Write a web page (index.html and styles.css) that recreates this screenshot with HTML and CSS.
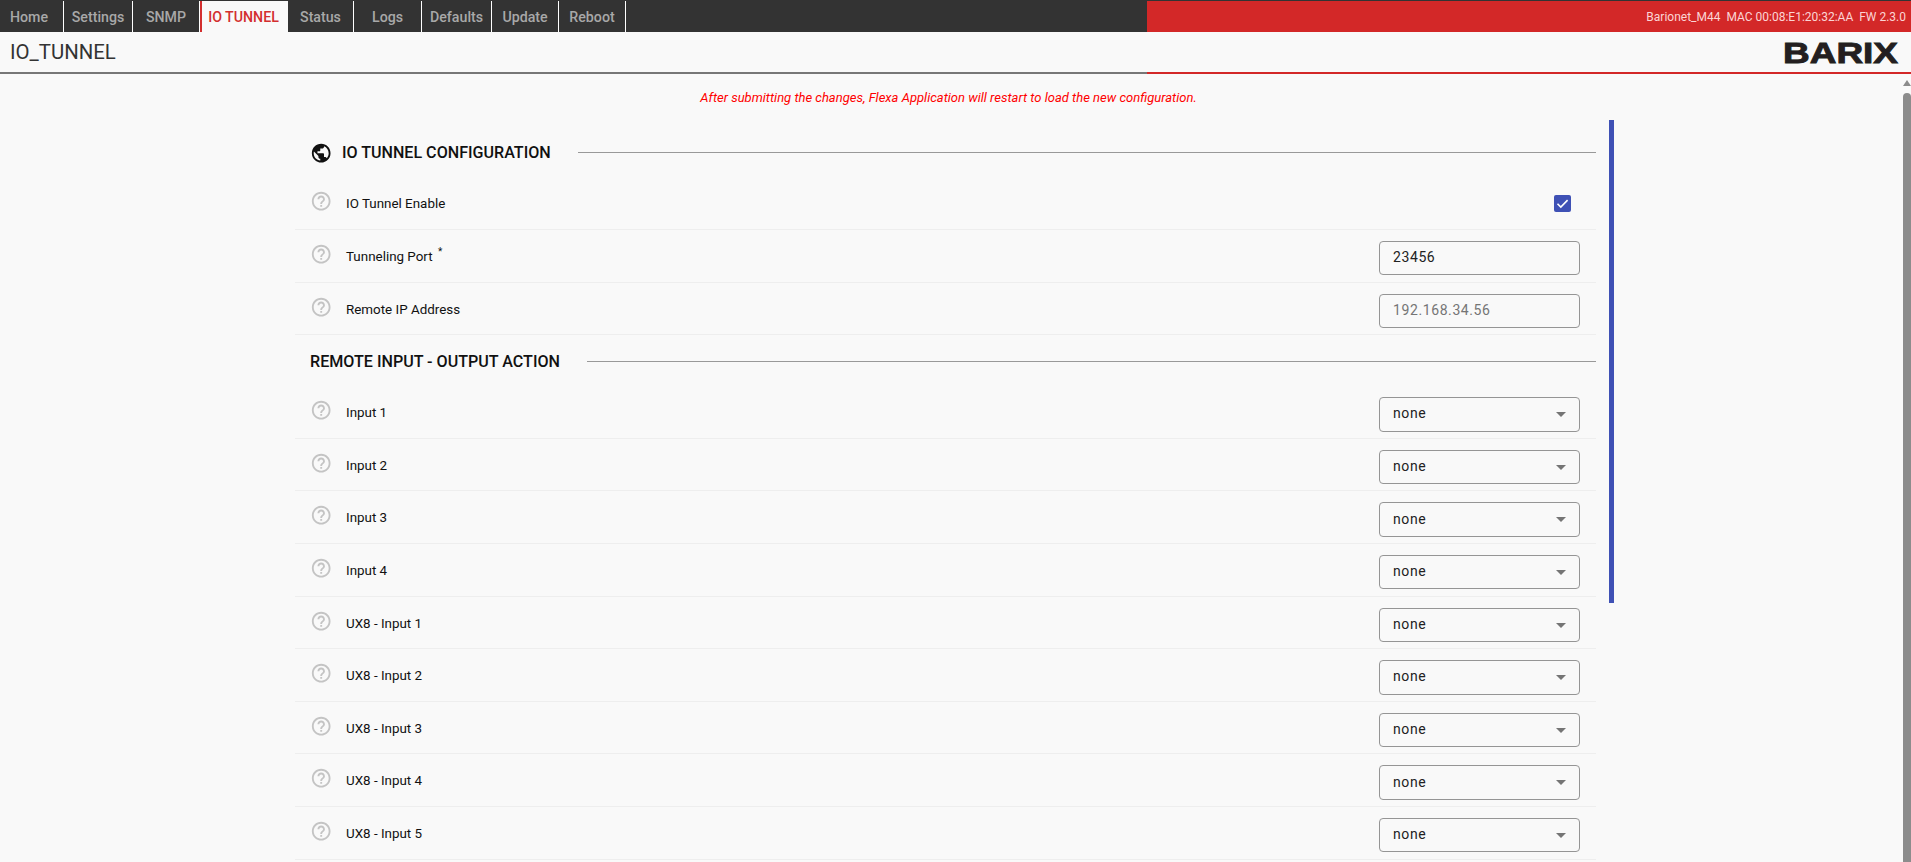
FILE: index.html
```html
<!DOCTYPE html>
<html lang="en">
<head>
<meta charset="utf-8">
<title>IO_TUNNEL</title>
<link rel="stylesheet" href="styles.css">
</head>
<body>
<svg class="defs" width="0" height="0" aria-hidden="true">
  <symbol id="help" viewBox="0 0 24 24"><path d="M11 18h2v-2h-2v2zm1-16C6.48 2 2 6.48 2 12s4.48 10 10 10 10-4.48 10-10S17.52 2 12 2zm0 18c-4.41 0-8-3.59-8-8s3.59-8 8-8 8 3.59 8 8-3.59 8-8 8zm0-14c-2.21 0-4 1.79-4 4h2c0-1.1.9-2 2-2s2 .9 2 2c0 2-3 1.75-3 5h2c0-2.25 3-2.5 3-5 0-2.21-1.79-4-4-4z"/></symbol>
  <symbol id="globe" viewBox="0 0 24 24"><path d="M12 2C6.48 2 2 6.48 2 12s4.48 10 10 10 10-4.48 10-10S17.52 2 12 2zm-1 17.93c-3.95-.49-7-3.85-7-7.93 0-.62.08-1.21.21-1.79L9 15v1c0 1.1.9 2 2 2v1.93zm6.9-2.54c-.26-.81-1-1.39-1.9-1.39h-1v-3c0-.55-.45-1-1-1H8v-2h2c.55 0 1-.45 1-1V7h2c1.1 0 2-.9 2-2v-.41c2.93 1.19 5 4.06 5 7.41 0 2.08-.8 3.97-2.1 5.39z"/></symbol>
</svg>
<header class="topbar">
  <nav class="tabs">
    <a class="tab tab-home">Home</a>
    <a class="tab">Settings</a>
    <a class="tab">SNMP</a>
    <a class="tab tab-active">IO TUNNEL</a>
    <a class="tab">Status</a>
    <a class="tab">Logs</a>
    <a class="tab">Defaults</a>
    <a class="tab">Update</a>
    <a class="tab">Reboot</a>
  </nav>
  <div class="device">Barionet_M44&nbsp; MAC 00:08:E1:20:32:AA&nbsp; FW 2.3.0</div>
</header>
<div class="titlebar">
  <h1 class="page-title">IO_TUNNEL</h1>
  <svg class="logo" width="116" height="34" viewBox="0 0 116 34" role="img" aria-label="BARIX"><text class="logo-text" x="0" y="27" textLength="115" lengthAdjust="spacingAndGlyphs">BARIX</text></svg>
</div>
<main class="page">
  <div class="scroll-content">
    <p class="notice">After submitting the changes, Flexa Application will restart to load the new configuration.</p>
    <div class="panel">
      <form class="form">
        <h2 class="heading heading-first"><svg class="icon globe"><use href="#globe"/></svg><span>IO TUNNEL CONFIGURATION</span></h2>
        <div class="row"><svg class="icon help"><use href="#help"/></svg><label class="label">IO Tunnel Enable</label><span class="check"><svg viewBox="0 0 17 17" width="17" height="17"><path d="M3.5 8.8l3.3 3.3 6.8-7" fill="none" stroke="#fff" stroke-width="1.6"/></svg></span></div>
        <div class="row"><svg class="icon help"><use href="#help"/></svg><label class="label">Tunneling Port <sup class="req">*</sup></label><input class="field" value="23456"></div>
        <div class="row"><svg class="icon help"><use href="#help"/></svg><label class="label">Remote IP Address</label><input class="field" placeholder="192.168.34.56"></div>
        <h2 class="heading heading-second"><span>REMOTE INPUT - OUTPUT ACTION</span></h2>
        <div class="row"><svg class="icon help"><use href="#help"/></svg><label class="label">Input 1</label><div class="select"><select class="field"><option>none</option></select></div></div>
        <div class="row"><svg class="icon help"><use href="#help"/></svg><label class="label">Input 2</label><div class="select"><select class="field"><option>none</option></select></div></div>
        <div class="row"><svg class="icon help"><use href="#help"/></svg><label class="label">Input 3</label><div class="select"><select class="field"><option>none</option></select></div></div>
        <div class="row"><svg class="icon help"><use href="#help"/></svg><label class="label">Input 4</label><div class="select"><select class="field"><option>none</option></select></div></div>
        <div class="row"><svg class="icon help"><use href="#help"/></svg><label class="label">UX8 - Input 1</label><div class="select"><select class="field"><option>none</option></select></div></div>
        <div class="row"><svg class="icon help"><use href="#help"/></svg><label class="label">UX8 - Input 2</label><div class="select"><select class="field"><option>none</option></select></div></div>
        <div class="row"><svg class="icon help"><use href="#help"/></svg><label class="label">UX8 - Input 3</label><div class="select"><select class="field"><option>none</option></select></div></div>
        <div class="row"><svg class="icon help"><use href="#help"/></svg><label class="label">UX8 - Input 4</label><div class="select"><select class="field"><option>none</option></select></div></div>
        <div class="row"><svg class="icon help"><use href="#help"/></svg><label class="label">UX8 - Input 5</label><div class="select"><select class="field"><option>none</option></select></div></div>
      </form>
      <div class="indicator"></div>
    </div>
  </div>
  <div class="scrollbar"><span class="scroll-arrow"></span><span class="scroll-thumb"></span></div>
</main>
</body>
</html>
```

FILE: styles.css
```css
* { box-sizing: border-box; }
html, body { height: 100%; }
body {
  margin: 0;
  display: flex;
  flex-direction: column;
  overflow: hidden;
  background: #f9f9f9;
  color: #111;
  font-family: Roboto, "Liberation Sans", sans-serif;
}
.defs { position: absolute; }

.topbar {
  display: flex;
  justify-content: space-between;
  height: 32px;
  flex: none;
  padding-top: 1px;
  background: #333;
}
.tabs {
  display: grid;
  grid-template-columns: 64px 69px 67px 88px 66px 68px 70px 67px 67px;
}
.tab {
  display: flex;
  align-items: center;
  justify-content: center;
  border-right: 1px solid #fff;
  color: #a8a8a8;
  font-size: 14.2px;
  font-weight: 500;
}
.tab-home { padding-right: 5px; }
.tab-active {
  padding-right: 3px;
  border-right: 0;
  border-left: 2px solid #d32f2f;
  background: #f9f9f9;
  color: #d32f2f;
}
.device {
  width: 764px;
  padding-right: 5px;
  background: #d32828;
  color: #fbd5d5;
  font-size: 12px;
  line-height: 32px;
  text-align: right;
  white-space: nowrap;
}

.titlebar {
  display: flex;
  align-items: center;
  justify-content: space-between;
  flex: none;
  height: 42px;
  padding: 0 12px 0 10px;
  border-bottom: 2px solid;
  border-image: linear-gradient(to right, #777 1147px, #d32828 1147px) 1;
}
.page-title {
  margin: 0;
  font-size: 20.4px;
  font-weight: 400;
  color: #333;
}
.logo {
  display: block;
  margin-top: 2px;
  overflow: visible;
}
.logo-text {
  font-family: "Liberation Sans", Arial, sans-serif;
  font-size: 29px;
  font-weight: 700;
  fill: #231f20;
  stroke: #231f20;
  stroke-width: .9px;
}

.page {
  display: flex;
  flex: 1;
  min-height: 0;
  overflow: hidden;
}
.scroll-content {
  flex: 1;
  min-width: 0;
}
.notice {
  margin: 0;
  height: 46px;
  padding-top: 16px;
  padding-right: 6px;
  color: #f00;
  font-size: 13px;
  font-style: italic;
  line-height: 16px;
  text-align: center;
}
.panel {
  display: flex;
  align-items: flex-start;
  padding-left: 295px;
}
.form {
  width: 1301px;
}
.indicator {
  flex: none;
  width: 5px;
  height: 483px;
  margin-left: 13px;
  background: #3f51b5;
}

.heading {
  display: flex;
  align-items: center;
  margin: 0;
  color: #111;
  font-size: 16.1px;
  font-weight: 500;
  white-space: nowrap;
}
.heading::after {
  content: "";
  flex: 1;
  height: 1px;
  margin-left: 27px;
  background: #999;
}
.heading-first {
  height: 57.4px;
  padding: 8.6px 0 0 14.5px;
  gap: 10px;
}
.heading-first::after { margin-left: 17px; }
.heading-second {
  height: 51px;
  padding: 2px 0 0 15px;
}

.row {
  display: flex;
  align-items: flex-start;
  height: 52.6px;
  padding: 11px 16px 0 14.5px;
  border-bottom: 1px solid #eee;
}
.icon {
  display: block;
  flex: none;
  width: 22.4px;
  height: 22.4px;
}
.globe { fill: #111; }
.help {
  fill: #c4c4c4;
  margin-top: 2px;
}
.label {
  flex: 1;
  margin-left: 14.1px;
  color: #111;
  font-size: 13.4px;
  line-height: 31px;
}
.req {
  font-size: 10px;
  line-height: 0;
  vertical-align: 6px;
  margin-left: 2px;
}
.check {
  display: block;
  flex: none;
  width: 17px;
  height: 17px;
  margin: 6.6px 9px 0 0;
  border-radius: 2px;
  background: #3f51b5;
}
.check svg { display: block; }
.field {
  display: block;
  width: 201px;
  height: 34.4px;
  padding: 0 13px 2px;
  border: 1px solid #959595;
  border-radius: 4px;
  background: transparent;
  color: #222;
  font-family: Roboto, "Liberation Sans", sans-serif;
  font-size: 14px;
  letter-spacing: .6px;
  outline: 0;
  appearance: none;
}
.field::placeholder {
  color: #757575;
  opacity: 1;
}
.select {
  position: relative;
  flex: none;
}
.select::after {
  content: "";
  position: absolute;
  top: 15px;
  right: 14px;
  border-top: 5px solid #757575;
  border-left: 5px solid transparent;
  border-right: 5px solid transparent;
  pointer-events: none;
}

.scrollbar {
  flex: none;
  display: flex;
  flex-direction: column;
  align-items: center;
  width: 8px;
  padding-top: 6px;
}
.scroll-arrow {
  flex: none;
  width: 0;
  height: 0;
  border-bottom: 6px solid #8c8c8c;
  border-left: 4px solid transparent;
  border-right: 4px solid transparent;
}
.scroll-thumb {
  flex: 1;
  width: 8px;
  margin-top: 7px;
  border-radius: 4px 4px 0 0;
  background: #8c8c8c;
}
```
